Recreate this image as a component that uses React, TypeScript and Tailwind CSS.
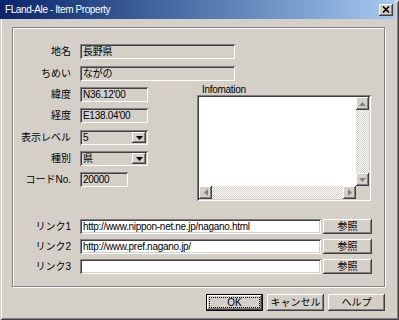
import React from "react";

const sunken =
  "shadow-[inset_1px_1px_0_#808080,inset_-1px_-1px_0_#fff,inset_2px_2px_0_#404040,inset_-2px_-2px_0_#d4d0c8]";
const raised =
  "shadow-[inset_-1px_-1px_0_#404040,inset_1px_1px_0_#fff,inset_-2px_-2px_0_#808080,inset_2px_2px_0_#d4d0c8]";
const dither =
  "bg-[image:repeating-conic-gradient(#fff_0_25%,#d4d0c8_0_50%)] bg-[length:2px_2px]";

const Label = ({ text }: { text: string }) => (
  <div className="w-[58px] shrink-0 text-right text-[10px] leading-[15px] mr-[9px]">{text}</div>
);

const Field = ({ value, width, white }: { value: string; width: number; white?: boolean }) => (
  <div
    className={`${sunken} h-[15px] pl-[3px] text-[10px] leading-[15px] tracking-[-0.3px] overflow-hidden whitespace-nowrap ${
      white ? "bg-white" : "bg-[#d4d0c8]"
    }`}
    style={{ width }}
  >
    {value}
  </div>
);

const Arrow = ({ dir, color = "#000" }: { dir: "up" | "down" | "left" | "right"; color?: string }) => {
  const pts = {
    up: "0,4 7,4 3.5,0",
    down: "0,0 7,0 3.5,4",
    left: "4,0 4,7 0,3.5",
    right: "0,0 0,7 4,3.5",
  }[dir];
  const vert = dir === "up" || dir === "down";
  return (
    <svg width={vert ? 7 : 4} height={vert ? 4 : 7} viewBox={vert ? "0 0 7 4" : "0 0 4 7"}>
      <polygon points={pts} fill={color} />
    </svg>
  );
};

const Combo = ({ value }: { value: string }) => (
  <div className={`${sunken} bg-[#d4d0c8] w-[68px] h-[15px] flex items-center p-[2px]`}>
    <div className="flex-1 pl-[1px] text-[10px] leading-[11px]">{value}</div>
    <div className={`${raised} bg-[#d4d0c8] w-[14px] h-[11px] flex items-center justify-center`}>
      <Arrow dir="down" />
    </div>
  </div>
);

const ScrollBtn = ({ dir }: { dir: "up" | "down" | "left" | "right" }) => (
  <div className={`${raised} bg-[#d4d0c8] w-[13px] h-[13px] shrink-0 flex items-center justify-center`}>
    <Arrow dir={dir} color="#808080" />
  </div>
);

const Button = ({ text, width, height, def }: { text: string; width: number; height: number; def?: boolean }) =>
  def ? (
    <div className="border border-black flex" style={{ width, height }}>
      <div className={`${raised} bg-[#d4d0c8] flex-1 flex p-[2px]`}>
        <div className="flex-1 border border-dotted border-black flex items-center justify-center text-[10px]">
          {text}
        </div>
      </div>
    </div>
  ) : (
    <div
      className={`${raised} bg-[#d4d0c8] flex items-center justify-center text-[10px]`}
      style={{ width, height }}
    >
      {text}
    </div>
  );

export default function App() {
  const sideRows = [
    { label: "緯度", el: <Field value="N36.12'00" width={68} />, mt: "" },
    { label: "経度", el: <Field value="E138.04'00" width={68} />, mt: "mt-[6px]" },
    { label: "表示レベル", el: <Combo value="5" />, mt: "mt-[7px]" },
    { label: "種別", el: <Combo value="県" />, mt: "mt-[6px]" },
    { label: "コードNo.", el: <Field value="20000" width={48} />, mt: "mt-[6px]" },
  ];
  const links = ["http://www.nippon-net.ne.jp/nagano.html", "http://www.pref.nagano.jp/", ""];

  return (
    <div
      className="w-[399px] h-[320px] bg-[#d4d0c8] flex flex-col text-black font-['Liberation_Sans','Noto_Sans_CJK_JP',sans-serif] shadow-[inset_1px_1px_0_#d4d0c8,inset_-1px_-1px_0_#404040,inset_2px_2px_0_#fff,inset_-2px_-2px_0_#808080]"
    >
      {/* title bar */}
      <div className="h-[19px] mr-[4px] bg-linear-to-r from-[#0a246a] to-[#a6caf0] flex items-center pl-[5px] pr-[2px]">
        <span className="text-white text-[10px] leading-none tracking-[-0.4px] mt-[1px]">
          FLand-Ale - Item Property
        </span>
        <div className={`${raised} bg-[#d4d0c8] ml-auto w-[14px] h-[12px] flex items-center justify-center`}>
          <svg width="8" height="7" viewBox="0 0 8 7">
            <path d="M1 0.5 L7 6.5 M7 0.5 L1 6.5" stroke="#000" strokeWidth="1.6" />
          </svg>
        </div>
      </div>

      {/* group */}
      <div className="ml-[12px] mt-[8px] w-[373px] h-[260px] border border-[#808080] shadow-[inset_1px_1px_0_#fff,1px_1px_0_#fff] pt-[16px] flex flex-col">
        <div className="flex items-center">
          <Label text="地名" />
          <Field value="長野県" width={155} />
        </div>
        <div className="flex items-center mt-[7px]">
          <Label text="ちめい" />
          <Field value="ながの" width={155} />
        </div>

        <div className="flex mt-[6px]">
          <div className="flex flex-col">
            {sideRows.map((r) => (
              <div key={r.label} className={`flex items-center ${r.mt}`}>
                <Label text={r.label} />
                {r.el}
              </div>
            ))}
          </div>
          <div className="ml-[49px] w-[174px] flex flex-col">
            <div className="h-[8px] pl-[5px] text-[10px] leading-[5px] tracking-[-0.3px]">Infomation</div>
            <div className={`${sunken} bg-white h-[106px] p-[2px] flex flex-col`}>
              <div className="flex-1 flex">
                <div className="flex-1" />
                <div className="w-[13px] flex flex-col">
                  <ScrollBtn dir="up" />
                  <div className={`flex-1 ${dither}`} />
                  <ScrollBtn dir="down" />
                </div>
              </div>
              <div className="h-[13px] flex">
                <ScrollBtn dir="left" />
                <div className={`flex-1 ${dither}`} />
                <ScrollBtn dir="right" />
                <div className="w-[13px] bg-[#d4d0c8]" />
              </div>
            </div>
          </div>
        </div>

        <div className="flex flex-col gap-[5px] mt-[18px]">
          {links.map((url, i) => (
            <div key={i} className="flex items-center">
              <Label text={`リンク${i + 1}`} />
              <Field value={url} width={241} white />
              <div className="ml-[2px]">
                <Button text="参照" width={49} height={15} />
              </div>
            </div>
          ))}
        </div>
      </div>

      {/* dialog buttons */}
      <div className="flex justify-end gap-[4px] mt-[7px] pr-[14px]">
        <Button text="OK" width={57} height={17} def />
        <Button text="キャンセル" width={57} height={17} />
        <Button text="ヘルプ" width={57} height={17} />
      </div>
    </div>
  );
}
